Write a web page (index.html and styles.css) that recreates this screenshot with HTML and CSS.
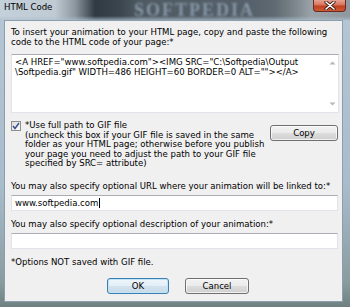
FILE: index.html
```html
<!DOCTYPE html>
<html>
<head>
<meta charset="utf-8">
<link rel="stylesheet" href="styles.css">
</head>
<body>
<div class="window">
  <div class="titlebar">
    <span class="watermark">SOFTPEDIA</span>
    <span class="title">HTML Code</span>
    <div class="close">
      <svg width="12" height="9" viewBox="0 0 12 9"><path d="M2 1 L10 8 M10 1 L2 8" stroke="#3a1a14" stroke-width="3.2" stroke-linecap="round"/><path d="M2 1 L10 8 M10 1 L2 8" stroke="#fff" stroke-width="1.6" stroke-linecap="round"/></svg>
    </div>
  </div>
  <div class="client">
    <p class="intro">To insert your animation to your HTML page, copy and paste the following<br>code to the HTML code of your page:*</p>
    <div class="codebox">
      <div class="code">&lt;A HREF="www.softpedia.com"&gt;&lt;IMG SRC="C:\Softpedia\Output<br>\Softpedia.gif" WIDTH=486 HEIGHT=60 BORDER=0 ALT=""&gt;&lt;/A&gt;</div>
      <div class="scroll">
        <svg width="7" height="4" viewBox="0 0 7 4"><path d="M0.5 3.5 L3.5 0.5 L6.5 3.5Z" fill="#b5b5b5"/></svg>
        <svg width="7" height="4" viewBox="0 0 7 4"><path d="M0.5 0.5 L3.5 3.5 L6.5 0.5Z" fill="#b5b5b5"/></svg>
      </div>
    </div>
    <div class="optrow">
      <div class="chk">
        <span class="box"><svg width="8" height="8" viewBox="0 0 8 8"><path d="M1 4 L3 6.5 L7 1" fill="none" stroke="#3a4e8c" stroke-width="1.4"/></svg></span>
        <p class="chktext">*Use full path to GIF file<br>(uncheck this box if your GIF file is saved in the same<br>folder as your HTML page; otherwise before you publish<br>your page you need to adjust the path to your GIF file<br>specified by SRC= attribute)</p>
      </div>
      <div class="btn copy">Copy</div>
    </div>
    <p class="lbl first">You may also specify optional URL where your animation will be linked to:*</p>
    <div class="field">www.softpedia.com<span class="caret"></span></div>
    <p class="lbl">You may also specify optional description of your animation:*</p>
    <div class="field"></div>
    <p class="lbl">*Options NOT saved with GIF file.</p>
    <div class="buttons">
      <div class="btn ok">OK</div>
      <div class="btn cancel">Cancel</div>
    </div>
  </div>
</div>
</body>
</html>
```
FILE: styles.css
```css
html, body { margin: 0; padding: 0; }
body {
  width: 350px; height: 307px; overflow: hidden;
  font-family: "DejaVu Sans Condensed", "DejaVu Sans", sans-serif;
  font-stretch: semi-condensed;
  font-size: 9.5px;
  color: #000;
}
p { margin: 0; }
.window {
  width: 350px; height: 307px;
  display: flex; flex-direction: column;
  background: linear-gradient(180deg, #b6c6d4 0%, #a9bccc 60%, #8a9c9e 92%, #6e8080 100%);
  box-sizing: border-box;
}
.titlebar {
  position: relative;
  height: 20px; flex: none;
  background: linear-gradient(90deg, #c4d0da 0px, #bfcad3 55px, #8c979f 75px, #2f3a42 95px, #3b464e 120px, #4f5a62 140px, #55606a 250px, #5f6a72 275px, #7c868c 295px, #9aa4aa 312px, #8e989e 350px);
}
.titlebar::after {
  content: ""; position: absolute; left: 0; right: 0; bottom: 0; height: 4px;
  background: linear-gradient(180deg, rgba(170,190,205,0) 0%, rgba(175,192,206,0.7) 100%);
}
.watermark {
  position: absolute; left: 134px; top: 0;
  font-family: "Liberation Serif", serif; font-weight: bold;
  font-size: 18px; line-height: 20px; letter-spacing: 2px;
  color: #8797a6; filter: blur(1px);
}
.title {
  position: absolute; left: 4px; top: 2px;
  line-height: 10px;
  color: #000;
}
.close {
  position: absolute; left: 313px; top: 0; width: 33px; height: 12px;
  box-sizing: border-box;
  border: 1px solid #6b2a20; border-top: none;
  border-radius: 0 0 4px 4px;
  background: linear-gradient(180deg, #e7a291 0%, #d7735c 45%, #c0401f 55%, #cf5a36 100%);
  display: flex; align-items: center; justify-content: center;
}
.close svg { display: block; margin-top: -1px; }
.client {
  flex: 1;
  margin: 0 7px 5px 4px;
  background: #f0f0f0;
  border: 1px solid #8b9eaf;
  padding: 6px 3px 0 6px;
  display: flex; flex-direction: column;
}
.intro { line-height: 10px; }
.codebox {
  margin-top: 7px;
  height: 59px; box-sizing: border-box;
  background: #fff;
  border: 1px solid #e2e3ea; border-top-color: #abadb3;
  display: flex;
}
.code { flex: 1; padding: 2px 0 0 3px; line-height: 10px; }
.scroll {
  width: 12px; display: flex; flex-direction: column; justify-content: space-between; align-items: center;
  padding: 6px 0 6px 0;
}
.scroll svg { display: block; }
.optrow { display: flex; justify-content: space-between; margin-top: 7px; }
.chk { display: flex; gap: 4px; }
.box {
  width: 10px; height: 10px; box-sizing: border-box; margin-top: 1px;
  border: 1px solid #8e8f8f;
  background: linear-gradient(135deg, #dcdcdc, #fbfbfb);
  display: flex; align-items: center; justify-content: center;
}
.box svg { display: block; }
.chktext { line-height: 9.5px; }
.btn {
  box-sizing: border-box; height: 16px;
  border: 1px solid #707070; border-radius: 3px;
  background: linear-gradient(180deg, #f2f2f2 0%, #ebebeb 48%, #dddddd 52%, #cfcfcf 100%);
  box-shadow: inset 0 0 0 1px rgba(255,255,255,0.7);
  display: flex; align-items: center; justify-content: center;
  line-height: 10px;
}
.copy { width: 68px; margin-top: 5px; margin-right: 1px; }
.lbl { line-height: 10px; margin-top: 8px; }
.lbl.first { margin-top: 13px; }
.field {
  margin-top: 4px; height: 16px; box-sizing: border-box;
  margin-right: 1px;
  background: #fff;
  border: 1px solid #e2e3ea; border-top-color: #abadb3;
  padding: 0 0 0 3px; line-height: 14px;
  display: flex; align-items: center;
}
.caret { display: inline-block; width: 1px; height: 10px; background: #000; margin-left: 1px; }
.buttons { display: flex; gap: 16px; margin-top: 11px; padding-left: 96px; }
.ok { width: 62px; border-color: #3c7fb1; box-shadow: inset 0 0 0 1px #bfe3f7; background: linear-gradient(180deg, #eef6fb 0%, #e3eef6 48%, #d3e3ee 52%, #c9dbe8 100%); }
.cancel { width: 64px; }
```
